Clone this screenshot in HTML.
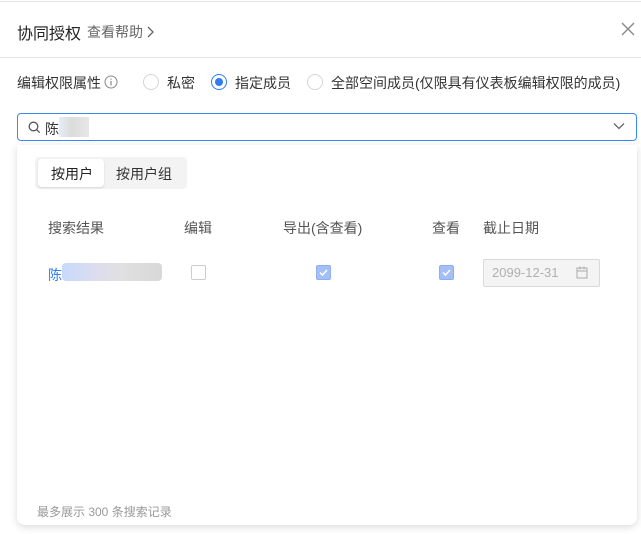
<!DOCTYPE html>
<html><head><meta charset="utf-8"><style>
*{box-sizing:border-box;margin:0;padding:0}
body{width:641px;height:534px;background:#fff;font-family:"Liberation Sans","Noto Sans CJK SC",sans-serif;position:relative;overflow:hidden;color:#333}
.a{position:absolute;white-space:nowrap}
</style></head><body>
<div class="a" style="left:0;top:1px;width:641px;height:1px;background:#e4e4e4"></div>
<div class="a" style="left:17px;top:20px;font-size:16px;color:#222">协同授权</div>
<div class="a" style="left:87px;top:22px;font-size:14px;color:#666">查看帮助 <svg width="8" height="12" viewBox="0 0 8 12" style="vertical-align:-1px"><path d="M1 1l5 5-5 5" fill="none" stroke="#666" stroke-width="1.3"/></svg></div>
<svg class="a" style="left:621px;top:22px" width="14" height="14" viewBox="0 0 14 14"><path d="M1 1l12 12M13 1L1 13" stroke="#888" stroke-width="1.4"/></svg>
<div class="a" style="left:0;top:57px;width:641px;height:1px;background:#e4e4e4"></div>

<div class="a" style="left:17px;top:73px;font-size:14px;color:#333">编辑权限属性</div>
<svg class="a" style="left:104px;top:75px" width="14" height="14" viewBox="0 0 14 14"><circle cx="7" cy="7" r="6" fill="none" stroke="#888"/><path d="M7 6v4.5M7 3.5v1.3" stroke="#888" stroke-width="1.2"/></svg>
<div class="a" style="left:143px;top:74px;width:16px;height:16px;border:1px solid #d5d5d5;border-radius:50%"></div>
<div class="a" style="left:167px;top:73px;font-size:14px">私密</div>
<div class="a" style="left:211px;top:74px;width:16px;height:16px;border:1px solid #2f7cf6;border-radius:50%"><div style="margin:3px;width:8px;height:8px;border-radius:50%;background:#2f7cf6"></div></div>
<div class="a" style="left:235px;top:73px;font-size:14px">指定成员</div>
<div class="a" style="left:307px;top:74px;width:16px;height:16px;border:1px solid #d5d5d5;border-radius:50%"></div>
<div class="a" style="left:331px;top:73px;font-size:14px">全部空间成员(仅限具有仪表板编辑权限的成员)</div>

<div class="a" style="left:17px;top:113px;width:620px;height:28px;border:1px solid #3d86f5;border-radius:4px"></div>
<svg class="a" style="left:28px;top:121px" width="13" height="13" viewBox="0 0 13 13"><circle cx="5.5" cy="5.5" r="4.3" fill="none" stroke="#555" stroke-width="1.3"/><path d="M8.7 8.7l3 3" stroke="#555" stroke-width="1.3"/></svg>
<div class="a" style="left:45px;top:119px;font-size:14px;color:#333">陈</div>
<div class="a" style="left:59px;top:117px;width:30px;height:20px;background:linear-gradient(90deg,#dde6f5,#ccc 40%,#ddd);opacity:.7"></div>
<svg class="a" style="left:613px;top:122px" width="12" height="8" viewBox="0 0 12 8"><path d="M1 1.5l5 5 5-5" fill="none" stroke="#666" stroke-width="1.3"/></svg>

<div class="a" style="left:17px;top:145px;width:620px;height:380px;background:#fff;border-radius:0 0 8px 8px;box-shadow:0 2px 8px rgba(0,0,0,.15)"></div>
<div class="a" style="left:35px;top:157px;width:152px;height:32px;background:#f3f3f3;border-radius:4px"></div>
<div class="a" style="left:38px;top:159px;width:66px;height:28px;background:#fff;border-radius:4px;box-shadow:0 1px 2px rgba(0,0,0,.12)"></div>
<div class="a" style="left:51px;top:164px;font-size:14px;color:#222">按用户</div>
<div class="a" style="left:116px;top:164px;font-size:14px;color:#333">按用户组</div>

<div class="a" style="left:48px;top:218px;font-size:14px;color:#555">搜索结果</div>
<div class="a" style="left:184px;top:218px;font-size:14px;color:#555">编辑</div>
<div class="a" style="left:283px;top:218px;font-size:14px;color:#555">导出(含查看)</div>
<div class="a" style="left:432px;top:218px;font-size:14px;color:#555">查看</div>
<div class="a" style="left:483px;top:218px;font-size:14px;color:#555">截止日期</div>

<div class="a" style="left:48px;top:265px;font-size:14px;color:#2f7cf6">陈</div>
<div class="a" style="left:62px;top:263px;width:100px;height:18px;border-radius:4px;background:linear-gradient(90deg,#c7d9fb,#dde 35%,#e0e0e0 60%,#d8d8d8)"></div>
<div class="a" style="left:191px;top:265px;width:15px;height:15px;border:1px solid #ccc;border-radius:2px"></div>
<div class="a" style="left:316px;top:265px;width:15px;height:15px;background:#a3bff5;border:1px solid #8fb0ee;border-radius:2px"><svg width="13" height="13" viewBox="0 0 13 13" style="display:block"><path d="M3 6.5l2.5 2.5 4.5-5" fill="none" stroke="#fff" stroke-width="1.5"/></svg></div>
<div class="a" style="left:439px;top:265px;width:15px;height:15px;background:#a3bff5;border:1px solid #8fb0ee;border-radius:2px"><svg width="13" height="13" viewBox="0 0 13 13" style="display:block"><path d="M3 6.5l2.5 2.5 4.5-5" fill="none" stroke="#fff" stroke-width="1.5"/></svg></div>
<div class="a" style="left:483px;top:259px;width:117px;height:28px;background:#f4f4f4;border:1px solid #d9d9d9;border-radius:2px"></div>
<div class="a" style="left:492px;top:265px;font-size:13px;color:#b0b0b0">2099-12-31</div>
<svg class="a" style="left:576px;top:266px" width="12" height="13" viewBox="0 0 12 13"><rect x="1" y="2" width="10" height="10" fill="none" stroke="#aaa"/><path d="M1 5h10M4 0.5v3M8 0.5v3" stroke="#aaa"/></svg>

<div class="a" style="left:37px;top:503px;font-size:12px;color:#999">最多展示 300 条搜索记录</div>
</body></html>
